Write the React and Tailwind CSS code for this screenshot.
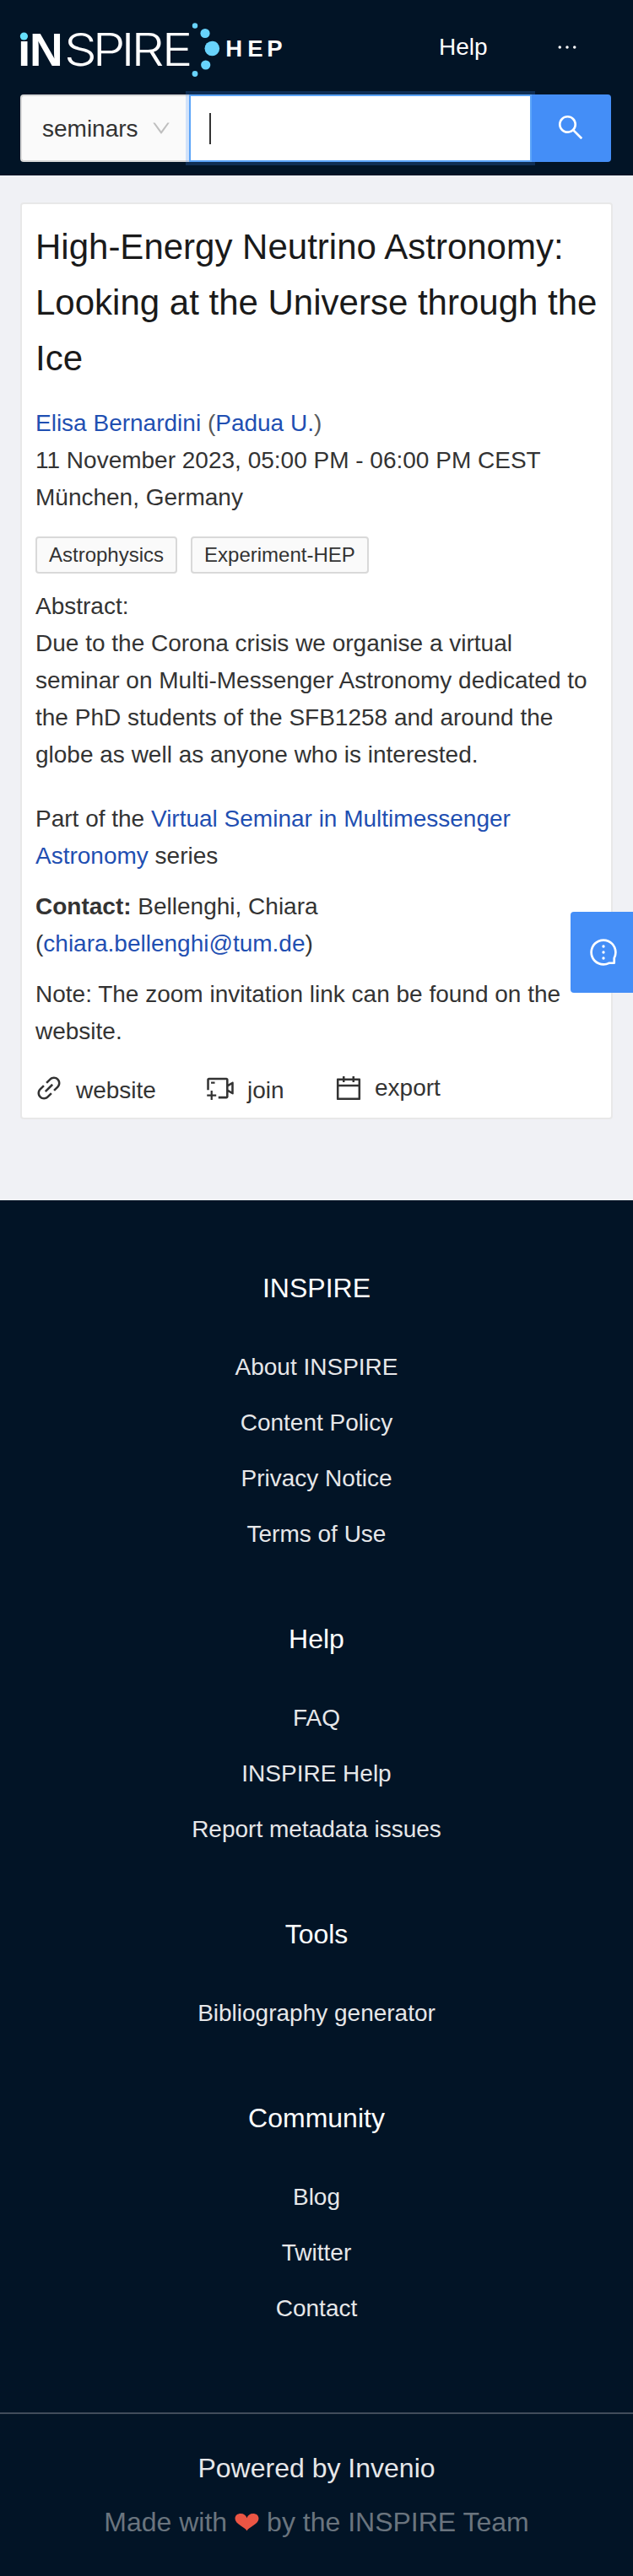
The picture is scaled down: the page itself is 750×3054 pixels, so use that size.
import {
  AiOutlineCalendar,
  AiOutlineDown,
  AiOutlineEllipsis,
  AiOutlineLink,
  AiOutlineMessage,
  AiOutlineSearch,
  AiOutlineVideoCameraAdd,
} from 'react-icons/ai';

const FOOTER = [
  { title: 'INSPIRE', links: ['About INSPIRE', 'Content Policy', 'Privacy Notice', 'Terms of Use'] },
  { title: 'Help', links: ['FAQ', 'INSPIRE Help', 'Report metadata issues'] },
  { title: 'Tools', links: ['Bibliography generator'] },
  { title: 'Community', links: ['Blog', 'Twitter', 'Contact'] },
];

function Logo() {
  return (
    <svg width="320" height="68" viewBox="20 26 320 68" className="-ml-1 block" aria-label="INSPIRE HEP">
      <g fill="#fff">
        <text x="21 35" y="78" fontFamily="Liberation Sans, sans-serif" fontWeight="700" fontSize="55">ıN</text>
        <text x="66.1 95.5 124.8 135.3 166.7" y="78" transform="scale(1.15 1)" fontFamily="Inter, sans-serif" fontWeight="300" fontSize="53.5">SPIRE</text>
        <text x="267.2 293.2 316.2" y="67" fontFamily="Liberation Sans, sans-serif" fontWeight="700" fontSize="27.5">HEP</text>
      </g>
      <g fill="#68d3fb">
        <circle cx="28.4" cy="43" r="4.6" fill="#66e0fc" />
        <circle cx="231" cy="30.5" r="3.2" />
        <circle cx="243" cy="39.5" r="5.6" />
        <circle cx="251.3" cy="57.5" r="8.8" />
        <circle cx="243.7" cy="77" r="5.6" />
        <circle cx="231" cy="87.5" r="3.4" />
      </g>
    </svg>
  );
}

function Header() {
  return (
    <header className="flex h-[208px] flex-col bg-[#021426] px-6">
      <div className="flex h-[112px] items-start pt-[26px]">
        <Logo />
        <a className="mt-2 ml-[180px] text-white">Help</a>
        <AiOutlineEllipsis className="mt-[14px] ml-[78px] text-[32px] text-white" />
      </div>
      <div className="flex h-20 w-[700px]">
        <div className="flex w-[200px] items-center rounded-l-[4px] border-2 border-r-0 border-[#d9d9d9] bg-[#fafafa] pl-6">
          <span className="mt-[2px]">seminars</span>
          <AiOutlineDown className="ml-[14px] text-[26px] text-[#bfbfbf]" />
        </div>
        <div className="z-0 flex w-[406px] items-center border-2 border-[#5ba4f9] bg-white pl-[22px] shadow-[0_0_0_4px_rgba(66,143,250,0.22)]">
          <div className="h-[37px] w-[2px] bg-[#333]" />
        </div>
        <button className="z-10 flex w-[94px] items-center justify-center rounded-r-[4px] bg-[#448ef7] text-white">
          <AiOutlineSearch className="mt-[-3px] mr-[2px] text-[36px]" />
        </button>
      </div>
    </header>
  );
}

function Tag({ children }) {
  return (
    <span className="flex h-11 items-center rounded-[4px] border-2 border-[#d9d9d9] bg-[#fafafa] px-[14px] text-[24px]">
      {children}
    </span>
  );
}

function Link({ children }) {
  return <a className="text-[#1f4fb2]">{children}</a>;
}

function Seminar() {
  return (
    <article className="h-[1087px] rounded-[4px] border-2 border-[#e8e8e8] bg-white px-4 pt-[18px]">
      <h1 className="text-[42px] leading-[66px] whitespace-nowrap text-[#1a1a1a]">
        High-Energy Neutrino Astronomy:<br />Looking at the Universe through the<br />Ice
      </h1>
      <div className="mt-[22px]">
        <Link>Elisa Bernardini</Link> <span className="text-[#595959]">(</span><Link>Padua U.</Link><span className="text-[#595959]">)</span>
      </div>
      <div>11 November 2023, 05:00 PM - 06:00 PM CEST</div>
      <div>München, Germany</div>
      <div className="mt-[24px] flex gap-4">
        <Tag>Astrophysics</Tag>
        <Tag>Experiment-HEP</Tag>
      </div>
      <div className="mt-[17px] whitespace-nowrap">
        Abstract:<br />
        Due to the Corona crisis we organise a virtual<br />
        seminar on Multi-Messenger Astronomy dedicated to<br />
        the PhD students of the SFB1258 and around the<br />
        globe as well as anyone who is interested.
      </div>
      <div className="mt-[32px]">
        Part of the <Link>Virtual Seminar in Multimessenger<br />Astronomy</Link> series
      </div>
      <div className="mt-4">
        <b>Contact:</b> Bellenghi, Chiara<br />(<Link>chiara.bellenghi@tum.de</Link>)
      </div>
      <div className="mt-4">Note: The zoom invitation link can be found on the<br />website.</div>
      <div className="mt-[24px] flex">
        <div className="flex w-[203px]">
          <AiOutlineLink className="mt-[3px] -ml-[2px] text-[36px]" />
          <span className="mt-[2px] ml-[14px]">website</span>
        </div>
        <div className="flex w-[150px]">
          <AiOutlineVideoCameraAdd className="mt-[3px] -ml-[2px] text-[36px]" />
          <span className="mt-[2px] ml-[14px]">join</span>
        </div>
        <div className="flex">
          <AiOutlineCalendar className="mt-[3px] text-[36px]" />
          <span className="-mt-px ml-[13px]">export</span>
        </div>
      </div>
    </article>
  );
}

function Footer() {
  return (
    <footer className="flex h-[1631px] flex-col items-center bg-[#021426] pt-[79px] text-center text-[#e6e7e9]">
      {FOOTER.map((section) => (
        <section key={section.title} className="mb-[77px]">
          <h2 className="mb-[47px] text-[32px] leading-[50px] text-white">{section.title}</h2>
          <ul className="flex flex-col gap-[22px]">
            {section.links.map((link) => (
              <li key={link}>{link}</li>
            ))}
          </ul>
        </section>
      ))}
      <div className="mt-[24px] flex w-full flex-col items-center gap-[14px] border-t-2 border-[#414c5b] pt-[39px] text-[32px] leading-[50px]">
        <div>Powered by Invenio</div>
        <div className="flex items-center text-[#6a747e]">
          Made with
          <svg width="29" height="22" viewBox="0 0 29 22" className="mx-[9px]" fill="#eb5544">
            <path d="M14.5 21.500C12.500 17 0.500 13.500 0.500 7C0.500 3 3.500 1 7.200 1C10.800 1 13.500 3 14.500 6.200C15.500 3 18.200 1 21.800 1C25.500 1 28.500 3 28.500 7C28.500 13.500 16.500 17 14.500 21.500Z" />
          </svg>
          by the INSPIRE Team
        </div>
      </div>
    </footer>
  );
}

export default function App() {
  return (
    <div className="relative w-[750px] overflow-hidden bg-[#f0f1f5] font-['Liberation_Sans',Arial,sans-serif] text-[28px] leading-[44px] text-[#333]">
      <Header />
      <main className="h-[1215px] px-6 pt-8">
        <Seminar />
      </main>
      <Footer />
      <button className="absolute top-[1081px] right-0 flex h-24 w-[74px] items-center justify-center rounded-l-[4px] bg-[#448ef7] text-white">
        <AiOutlineMessage className="ml-1 -rotate-90 text-[36px]" />
      </button>
    </div>
  );
}
